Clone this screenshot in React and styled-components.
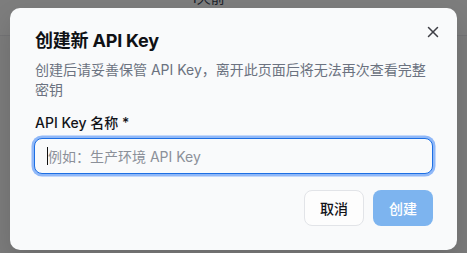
import React from "react";
import styled, { createGlobalStyle } from "styled-components";

const GlobalStyle = createGlobalStyle`
  html, body { margin: 0; padding: 0; }
  body {
    font-family: "Inter", "Noto Sans CJK SC", sans-serif;
    background: #f5f5f5;
    -webkit-font-smoothing: antialiased;
  }
  * { box-sizing: border-box; }
`;

const Page = styled.div`
  position: relative;
  width: 467px;
  height: 253px;
  overflow: hidden;
  background: #f6f6f7;
`;

const BgRow = styled.div`
  height: 36px;
  display: flex;
  align-items: flex-start;
  padding-left: 191px;
  border-bottom: 1px solid #e6e7ea;
  background: #fafafa;
`;

const BgCell = styled.span`
  margin-top: -12px;
  font-size: 14px;
  line-height: 20px;
  color: #374151;
`;

const Overlay = styled.div`
  position: absolute;
  inset: 0;
  background: rgba(0, 0, 0, 0.5);
  display: flex;
  justify-content: center;
  align-items: flex-start;
  padding-top: 8px;
`;

const Dialog = styled.div`
  position: relative;
  width: 447px;
  background: #f9fafb;
  border-radius: 10px;
  padding: 24px;
  display: flex;
  flex-direction: column;
  box-shadow: 0 10px 25px rgba(0, 0, 0, 0.12);
`;

const CloseButton = styled.button`
  position: absolute;
  top: 15px;
  right: 15px;
  width: 18px;
  height: 18px;
  padding: 0;
  border: none;
  background: transparent;
  color: #3f3f46;
  display: flex;
  align-items: center;
  justify-content: center;
  cursor: pointer;
`;

const Title = styled.h2`
  margin: 0 0 0 1px;
  font-size: 18px;
  line-height: 18px;
  font-weight: 650;
  color: #0f1115;
  letter-spacing: -0.2px;
`;

const Description = styled.p`
  margin: 10px 0 0 1px;
  font-size: 14px;
  line-height: 20px;
  color: #6b7280;
`;

const Field = styled.div`
  margin-top: 16px;
  display: flex;
  flex-direction: column;
  gap: 8px;
`;

const Label = styled.label`
  font-size: 14px;
  line-height: 14px;
  font-weight: 500;
  color: #111318;
  margin-left: 1px;
`;

const InputBox = styled.div`
  height: 36px;
  display: flex;
  align-items: center;
  border: 1px solid #1d6fe3;
  border-radius: 8px;
  padding-left: 12px;
  padding-right: 12px;
  background: #f9fafb;
  box-shadow: 0 0 0 2.5px rgba(59, 130, 246, 0.55);
`;

const Caret = styled.span`
  width: 1px;
  height: 18px;
  background: #111;
  flex: none;
`;

const Input = styled.input`
  flex: 1;
  min-width: 0;
  height: 100%;
  border: none;
  padding: 0;
  margin: 0;
  font-family: inherit;
  font-size: 14px;
  color: #111;
  background: transparent;
  outline: none;

  &::placeholder {
    color: #8b9099;
  }
`;

const Footer = styled.div`
  margin-top: 16px;
  display: flex;
  justify-content: flex-end;
  gap: 9px;
`;

const Button = styled.button`
  height: 36px;
  padding: 0 15px;
  border-radius: 8px;
  font-family: inherit;
  font-size: 14px;
  font-weight: 500;
  cursor: pointer;
  border: 1px solid ${(p) => (p.$primary ? "transparent" : "#e2e4e8")};
  background: ${(p) => (p.$primary ? "#7db4ef" : "#fdfdfd")};
  color: ${(p) => (p.$primary ? "#ffffff" : "#111318")};
`;

export default function App() {
  return (
    <>
      <GlobalStyle />
      <Page>
        <BgRow>
          <BgCell>1天前</BgCell>
        </BgRow>
        <Overlay>
          <Dialog>
            <CloseButton aria-label="关闭">
              <svg width="18" height="18" viewBox="0 0 24 24" fill="none" stroke="currentColor" strokeWidth="2" strokeLinecap="round" strokeLinejoin="round">
                <path d="M18 6 6 18" />
                <path d="m6 6 12 12" />
              </svg>
            </CloseButton>
            <Title>创建新 API Key</Title>
            <Description>创建后请妥善保管 API Key，离开此页面后将无法再次查看完整密钥</Description>
            <Field>
              <Label htmlFor="keyname">API Key 名称 *</Label>
              <InputBox>
                <Caret />
                <Input id="keyname" placeholder="例如：生产环境 API Key" />
              </InputBox>
            </Field>
            <Footer>
              <Button>取消</Button>
              <Button $primary disabled>创建</Button>
            </Footer>
          </Dialog>
        </Overlay>
      </Page>
    </>
  );
}
